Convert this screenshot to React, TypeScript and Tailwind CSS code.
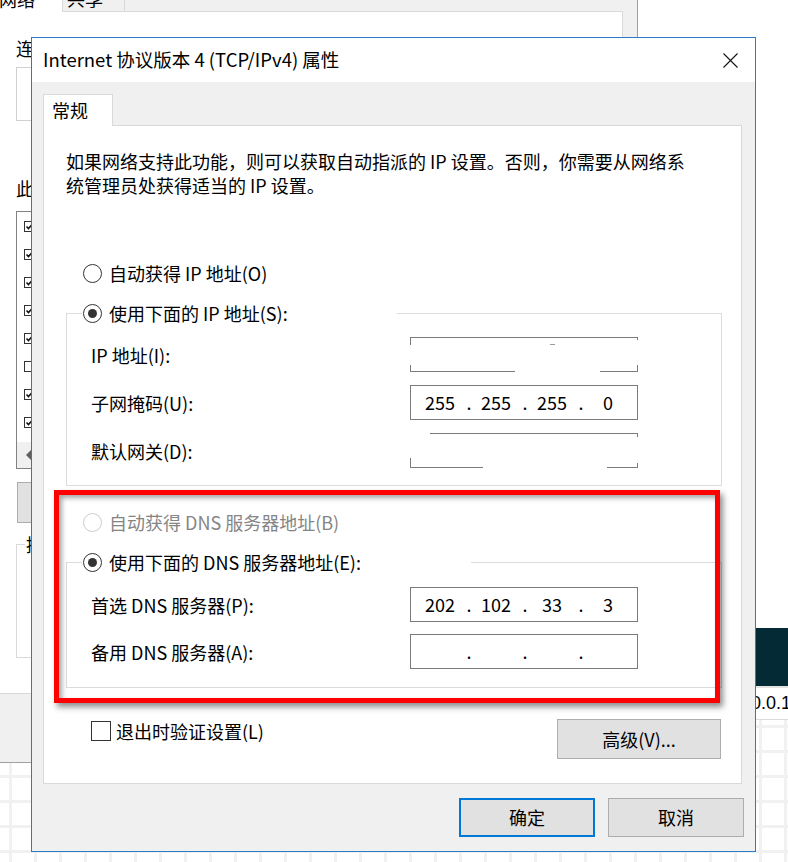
import React from "react";

const FONT = "font-['Noto_Sans_CJK_SC',sans-serif]";

function Radio({ checked, disabled }: { checked?: boolean; disabled?: boolean }) {
  return (
    <span
      className={`flex h-[19px] w-[19px] shrink-0 items-center justify-center rounded-full border bg-white ${
        disabled ? "border-[#cccccc]" : "border-[#333333]"
      }`}
    >
      {checked && <span className="h-[9px] w-[9px] rounded-full bg-[#333333]" />}
    </span>
  );
}

function IpField({
  parts,
  dots = true,
  children,
}: {
  parts?: string[];
  dots?: boolean;
  children?: React.ReactNode;
}) {
  const p = parts ?? ["", "", "", ""];
  return (
    <div className="relative flex h-[35px] w-[228px] shrink-0 items-center border border-[#7a7a7a] bg-white pl-[4px] text-[18px] text-black">
      {p.map((t, i) => (
        <React.Fragment key={i}>
          <span className="w-[52px] shrink-0 pr-[2px] text-center">{t}</span>
          {i < 3 && <span className="flex w-[4px] shrink-0 justify-center">{dots ? "." : ""}</span>}
        </React.Fragment>
      ))}
      {children}
    </div>
  );
}

function FieldRow({ label, children }: { label: string; children: React.ReactNode }) {
  return (
    <div className="flex h-[35px] items-center">
      <span className="w-[343px] shrink-0 pl-[24px] leading-none">{label}</span>
      {children}
    </div>
  );
}

function ListCheck({ checked }: { checked: boolean }) {
  return (
    <span className="flex h-[11px] w-[11px] shrink-0 items-center justify-center border border-[#333333] bg-white">
      {checked && (
        <svg width="9" height="9" viewBox="0 0 9 9">
          <polyline points="1.5,4.5 3.5,6.5 7.5,2" fill="none" stroke="#111" strokeWidth="1.6" />
        </svg>
      )}
    </span>
  );
}

function BackgroundWindow() {
  const items: [boolean, string][] = [
    [true, "Microsoft 网络客户端"],
    [true, "VMware Bridge Protocol"],
    [true, "Microsoft 网络的文件和打印机共享"],
    [true, "Npcap Packet Driver (NPCAP)"],
    [true, "QoS 数据包计划程序"],
    [false, "Microsoft 网络适配器多路传送器协议"],
    [true, "Internet 协议版本 4 (TCP/IPv4)"],
    [true, "Microsoft LLDP 协议驱动程序"],
  ];
  return (
    <div className="absolute left-0 top-0 flex h-[763px] w-[638px] flex-col border-b border-r border-[#a0a0a0] bg-[#f0f0f0]">
      <div className="relative z-10 -mb-px flex h-[12px] items-start">
        <div className="relative h-[12px] w-[62px] overflow-hidden bg-white">
          <span className="absolute left-[-1px] top-[-10px] whitespace-nowrap leading-[18px]">网络</span>
        </div>
        <div className="relative h-[11px] w-[63px] overflow-hidden border-x border-[#d9d9d9] bg-[#f0f0f0]">
          <span className="absolute left-[4px] top-[-11px] whitespace-nowrap leading-[18px]">共享</span>
        </div>
      </div>
      <div className="flex h-[683px] w-[623px] flex-col border-y border-r border-[#d9d9d9] bg-white pl-[16px]">
        <div className="mt-[27px] h-[18px] whitespace-nowrap leading-[18px]">连接时使用:</div>
        <div className="mt-[10px] h-[54px] w-[590px] border border-[#d0d0d0] bg-white" />
        <div className="mt-[58px] h-[18px] whitespace-nowrap leading-[18px]">此连接使用下列项目:</div>
        <div className="relative mt-[14px] h-[258px] w-[590px] border border-[#828282] bg-white">
          {items.map(([c, t], i) => (
            <div key={i} className="flex h-[28px] items-center gap-[6px] pl-[7px] text-[18px]">
              <ListCheck checked={c} />
              <span className="whitespace-nowrap">{t}</span>
            </div>
          ))}
          <div className="absolute bottom-0 left-0 right-0 flex h-[26px] items-center bg-[#f0f0f0] pl-[9px]">
            <span className="h-0 w-0 border-y-[5px] border-r-[5px] border-y-transparent border-r-[#606060]" />
          </div>
        </div>
        <div className="ml-[1px] mt-[13px] flex h-[41px] w-[150px] items-center justify-center border border-[#adadad] bg-[#e1e1e1]">
          安装(N)...
        </div>
        <div className="relative mt-[21px] h-[114px] w-[590px] border border-[#d9d9d9]">
          <span className="absolute left-[8px] top-[-10px] bg-white px-[1px] leading-[18px]">描述</span>
        </div>
      </div>
    </div>
  );
}

export default function App() {
  return (
    <div className={`relative h-[862px] w-[788px] overflow-hidden bg-white text-[18px] text-black ${FONT}`}>
      {/* background web page */}
      <div className="flex h-full flex-col">
        <div className="h-[628px] bg-white" />
        <div className="h-[58px] bg-[#042b35]" />
        <div className="flex h-[34px] items-center border-b border-t-[2px] border-b-[#dcdcdc] border-t-[#e4e4e4] bg-white pl-[716px] font-['Liberation_Sans',sans-serif] text-[18px]">
          127.0.0.1
        </div>
        <div className="flex-1 bg-white bg-[linear-gradient(to_right,#f1f1f1_3px,transparent_3px),linear-gradient(to_bottom,#f1f1f1_3px,transparent_3px)] bg-size-[25px_25px] bg-position-[9px_5px]" />
      </div>

      <BackgroundWindow />

      {/* dialog */}
      <div className="absolute left-[31px] top-[37px] flex h-[815px] w-[725px] flex-col border border-[#2b7bc6] bg-[#f0f0f0]">
        <div className="flex h-[44px] shrink-0 items-center justify-between bg-white pl-[11px] pr-[17px]">
          <span className="whitespace-nowrap text-[18.5px]">Internet 协议版本 4 (TCP/IPv4) 属性</span>
          <svg width="15" height="15" viewBox="0 0 15 15">
            <line x1="0.5" y1="0.5" x2="14.5" y2="14.5" stroke="#111" strokeWidth="1.1" />
            <line x1="14.5" y1="0.5" x2="0.5" y2="14.5" stroke="#111" strokeWidth="1.1" />
          </svg>
        </div>

        <div className="flex flex-col pl-[11px] pt-[12px]">
          <div className="relative z-10 -mb-px flex h-[32px] w-[70px] items-center border border-b-0 border-[#d9d9d9] bg-white pl-[8px]">
            常规
          </div>
          <div className="flex h-[659px] w-[699px] flex-col border border-[#d9d9d9] bg-white">
            <p className="ml-[22px] mt-[23px] leading-[24px]">
              <span className="block whitespace-nowrap">如果网络支持此功能，则可以获取自动指派的 IP 设置。否则，你需要从网络系</span>
              <span className="block whitespace-nowrap">统管理员处获得适当的 IP 设置。</span>
            </p>

            <div className="ml-[39px] mt-[63px] flex h-[26px] items-center gap-[7px]">
              <Radio />
              <span>自动获得 IP 地址(O)</span>
            </div>

            <div className="relative ml-[22px] mt-[27px] flex w-[656px] flex-col gap-[13px] border border-[#dcdcdc] pb-[17px] pt-[23px]">
              <div className="absolute left-[15px] top-[-14px] flex h-[26px] w-[315px] items-center gap-[7px] bg-white pl-[1px]">
                <Radio checked />
                <span>使用下面的 IP 地址(S):</span>
              </div>
              <FieldRow label="IP 地址(I):">
                <IpField dots={false}>
                  <span className="absolute left-[-2px] top-[7px] h-[20px] w-[4px] bg-white" />
                  <span className="absolute right-[-2px] top-[2px] h-[25px] w-[4px] bg-white" />
                  <span className="absolute bottom-[-2px] left-[104px] h-[3px] w-[85px] bg-white" />
                  <span className="absolute left-[139px] top-[6px] h-[1px] w-[5px] bg-[#9a9a9a]" />
                </IpField>
              </FieldRow>
              <FieldRow label="子网掩码(U):">
                <IpField parts={["255", "255", "255", "0"]} />
              </FieldRow>
              <FieldRow label="默认网关(D):">
                <IpField dots={false}>
                  <span className="absolute left-[-2px] top-[-2px] h-[3px] w-[21px] bg-white" />
                  <span className="absolute left-[-2px] top-[-2px] h-[26px] w-[4px] bg-white" />
                  <span className="absolute right-[-2px] top-[3px] h-[26px] w-[4px] bg-white" />
                  <span className="absolute bottom-[-2px] left-[72px] h-[3px] w-[124px] bg-white" />
                </IpField>
              </FieldRow>
            </div>

            <div className="ml-[39px] mt-[23px] flex h-[26px] items-center gap-[7px] text-[#858585]">
              <Radio disabled />
              <span>自动获得 DNS 服务器地址(B)</span>
            </div>

            <div className="relative ml-[22px] mt-[27px] flex w-[656px] flex-col gap-[12px] border border-[#dcdcdc] pb-[18px] pt-[24px]">
              <div className="absolute left-[15px] top-[-14px] flex h-[26px] w-[389px] items-center gap-[7px] bg-white pl-[1px]">
                <Radio checked />
                <span>使用下面的 DNS 服务器地址(E):</span>
              </div>
              <FieldRow label="首选 DNS 服务器(P):">
                <IpField parts={["202", "102", "33", "3"]} />
              </FieldRow>
              <FieldRow label="备用 DNS 服务器(A):">
                <IpField />
              </FieldRow>
            </div>

            <div className="mt-[30px] flex items-start justify-between pr-[20px]">
              <div className="ml-[47px] flex h-[26px] items-center gap-[5px]">
                <span className="h-[20px] w-[20px] border border-[#333333] bg-white" />
                <span>退出时验证设置(L)</span>
              </div>
              <div className="mt-[1px] flex h-[40px] w-[164px] items-center justify-center border border-[#adadad] bg-[#e1e1e1]">
                高级(V)...
              </div>
            </div>
          </div>

          <div className="mt-[14px] flex justify-end gap-[13px] pr-[11px]">
            <div className="flex h-[39px] w-[136px] items-center justify-center border-2 border-[#0078d7] bg-[#e1e1e1]">
              确定
            </div>
            <div className="flex h-[39px] w-[136px] items-center justify-center border border-[#adadad] bg-[#e1e1e1]">
              取消
            </div>
          </div>
        </div>

        {/* red annotation */}
        <div className="pointer-events-none absolute left-[22px] top-[452px] z-20 h-[213px] w-[666px] border-[5px] border-[#ff0000] shadow-[3px_4px_6px_rgba(0,0,0,0.45),inset_3px_3px_5px_rgba(0,0,0,0.35)]" />
      </div>
    </div>
  );
}
